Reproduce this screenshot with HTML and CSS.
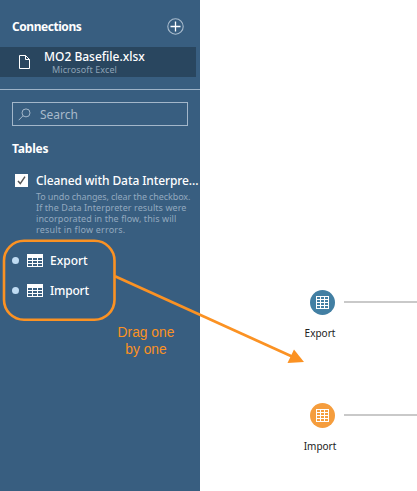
FILE: index.html
```
<!DOCTYPE html>
<html lang="en">
<head>
<meta charset="utf-8">
<title>Connections</title>
<link rel="stylesheet" href="styles.css">
</head>
<body>
<svg class="defs" width="0" height="0" aria-hidden="true">
  <symbol id="table" viewBox="0 0 16 13">
    <path fill="#fff" fill-rule="evenodd" d="M0 0h16v13H0zM1 4v2h4V4zM6 4v2h4V4zM11 4v2h4V4zM1 7v2h4V7zM6 7v2h4V7zM11 7v2h4V7zM1 10v2h4v-2zM6 10v2h4v-2zM11 10v2h4v-2z"/>
  </symbol>
  <symbol id="grid" viewBox="0 0 13 13">
    <path fill="#fff" fill-rule="evenodd" d="M0 0h13v13H0zM1 1v2h3V1zM5 1v2h3V1zM9 1v2h3V1zM1 4v2h3V4zM5 4v2h3V4zM9 4v2h3V4zM1 7v2h3V7zM5 7v2h3V7zM9 7v2h3V7zM1 10v2h3v-2zM5 10v2h3v-2zM9 10v2h3v-2z"/>
  </symbol>
</svg>
<div class="app">
  <aside class="sidebar">
    <header class="heading">
      <h2 class="title connections">Connections</h2>
      <svg class="add" width="17" height="17" viewBox="0 0 17 17" fill="none"><circle cx="8.5" cy="8.5" r="7.7" stroke="#a9bccd" stroke-width="1.1"/><path d="M8.5 3.5v10M3.5 8.5h10" stroke="#fff" stroke-width="1.3"/></svg>
    </header>
    <div class="connection">
      <svg width="11" height="14" viewBox="0 0 11 14" fill="none" stroke="#fff"><path d="M.5.5h6l4 4v9H.5zM6.5.5v4h4"/></svg>
      <div>
        <div class="file">MO2 Basefile.xlsx</div>
        <div class="kind">Microsoft Excel</div>
      </div>
    </div>
    <div class="search">
      <svg width="13" height="13" viewBox="0 0 13 13" fill="none" stroke="#a3b7ca"><circle cx="8" cy="4.9" r="4"/><path d="M5 7.8.7 12.2"/></svg>
      <span>Search</span>
    </div>
    <h2 class="title tables">Tables</h2>
    <div class="cleaned">
      <svg class="check" width="13" height="13" viewBox="0 0 13 13"><path fill="#fff" d="M0 0h13v13H0z"/><path d="M3 7l2.3 2.6L10 2.6" fill="none" stroke="#555" stroke-width="1.5"/></svg>
      <div>
        <div class="option">Cleaned with Data Interpre...</div>
        <div class="note"><div class="n1">To undo changes, clear the checkbox.</div><div class="n2">If the Data Interpreter results were</div><div class="n3">incorporated in the flow, this will</div><div class="n4">result in flow errors.</div></div>
      </div>
    </div>
    <div class="item"><i class="dot"></i><svg width="16" height="13"><use href="#table"/></svg><span>Export</span></div>
    <div class="item"><i class="dot"></i><svg width="16" height="13"><use href="#table"/></svg><span class="tight">Import</span></div>
  </aside>
  <main class="flow">
    <div class="step">
      <div class="track"><div class="node export"><svg width="13" height="13"><use href="#grid"/></svg></div><div class="line"></div></div>
      <div class="label">Export</div>
    </div>
    <div class="step">
      <div class="track"><div class="node import"><svg width="13" height="13"><use href="#grid"/></svg></div><div class="line"></div></div>
      <div class="label">Import</div>
    </div>
  </main>
  <svg class="overlay" width="417" height="491" viewBox="0 0 417 491">
    <rect x="4" y="240.7" width="110.5" height="79" rx="20" fill="none" stroke="#fb9223" stroke-width="2.6"/>
    <path d="M115 276.3 292 356.5" stroke="#fb9223" stroke-width="2.7"/>
    <path d="M294 349.5 287.5 363 304 362z" fill="#fb9223"/>
  </svg>
  <div class="hint">Drag one<br>by one</div>
</div>
</body>
</html>
```
FILE: styles.css
```
* { box-sizing: border-box; }
body { margin: 0; font-family: "Noto Sans", "Open Sans", sans-serif; background: #fff; }
svg { display: block; flex: none; }
.defs, .overlay { position: absolute; top: 0; left: 0; }
.app { position: relative; display: flex; width: 417px; height: 491px; overflow: hidden; white-space: nowrap; }
.sidebar { width: 200px; background: #385e80; color: #fff; }
.title { margin: 0; font-size: 12px; line-height: 18px; font-weight: 700; }
.connections { letter-spacing: -0.45px; }
.heading { display: flex; justify-content: space-between; align-items: center; height: 47px; padding: 6px 16px 0 12px; }
.connection { display: flex; align-items: center; gap: 14px; width: 196px; height: 30px; margin-bottom: 12px; padding-left: 19px; background: #29465f; }
.file { font-size: 12px; line-height: 15px; font-weight: 500; margin-top: -1px; }
.kind { padding-left: 8px; font-size: 9px; line-height: 11px; letter-spacing: 0.1px; color: #8fa4b7; }
.search { position: relative; display: flex; align-items: center; gap: 9px; width: 176px; height: 24px; margin: 25px 0 0 12px; padding-left: 5px; border: 1px solid #a3b7ca; color: #a9bacb; font-size: 12px; }
.search::before { content: ""; position: absolute; left: -13px; top: -14px; width: 200px; height: 1px; background: #9db3c8; }
.tables { margin: 14px 0 0 12px; letter-spacing: -0.2px; }
.cleaned { display: flex; gap: 8px; height: 73px; margin-top: 14px; padding-left: 15px; }
.check { margin-top: 2px; }
.option { font-size: 12px; line-height: 18px; font-weight: 500; letter-spacing: -0.1px; }
.note { margin-top: 1px; font-size: 9px; line-height: 11px; color: #93a9bf; }
.n1 { letter-spacing: -0.1px; }
.n2, .n3 { letter-spacing: 0.08px; }
.n4 { letter-spacing: 0.2px; }
.item { display: flex; align-items: center; height: 30px; padding-left: 12px; font-size: 12px; font-weight: 500; }
.dot { width: 7px; height: 7px; margin-right: 8px; border-radius: 50%; background: #c0dcf3; }
.item span { margin-left: 7px; }
.tight { letter-spacing: -0.2px; }
.flow { width: 217px; padding-top: 289px; }
.step { height: 113px; }
.track { display: flex; align-items: center; height: 26px; padding-left: 110px; }
.node { display: grid; place-items: center; width: 25px; height: 25px; border-radius: 50%; }
.export { background: #427fa3; }
.import { background: #f59d3d; }
.line { flex: 1; height: 2px; margin-left: 9px; background: #c9c9c9; }
.label { width: 60px; margin: 11px 0 0 90px; text-align: center; color: #222; font-size: 10px; line-height: 14px; }
.hint { position: absolute; left: 105px; top: 324px; width: 82px; text-align: center; color: #fb9223; font: 13.8px/17px "Liberation Sans", sans-serif; }
```
